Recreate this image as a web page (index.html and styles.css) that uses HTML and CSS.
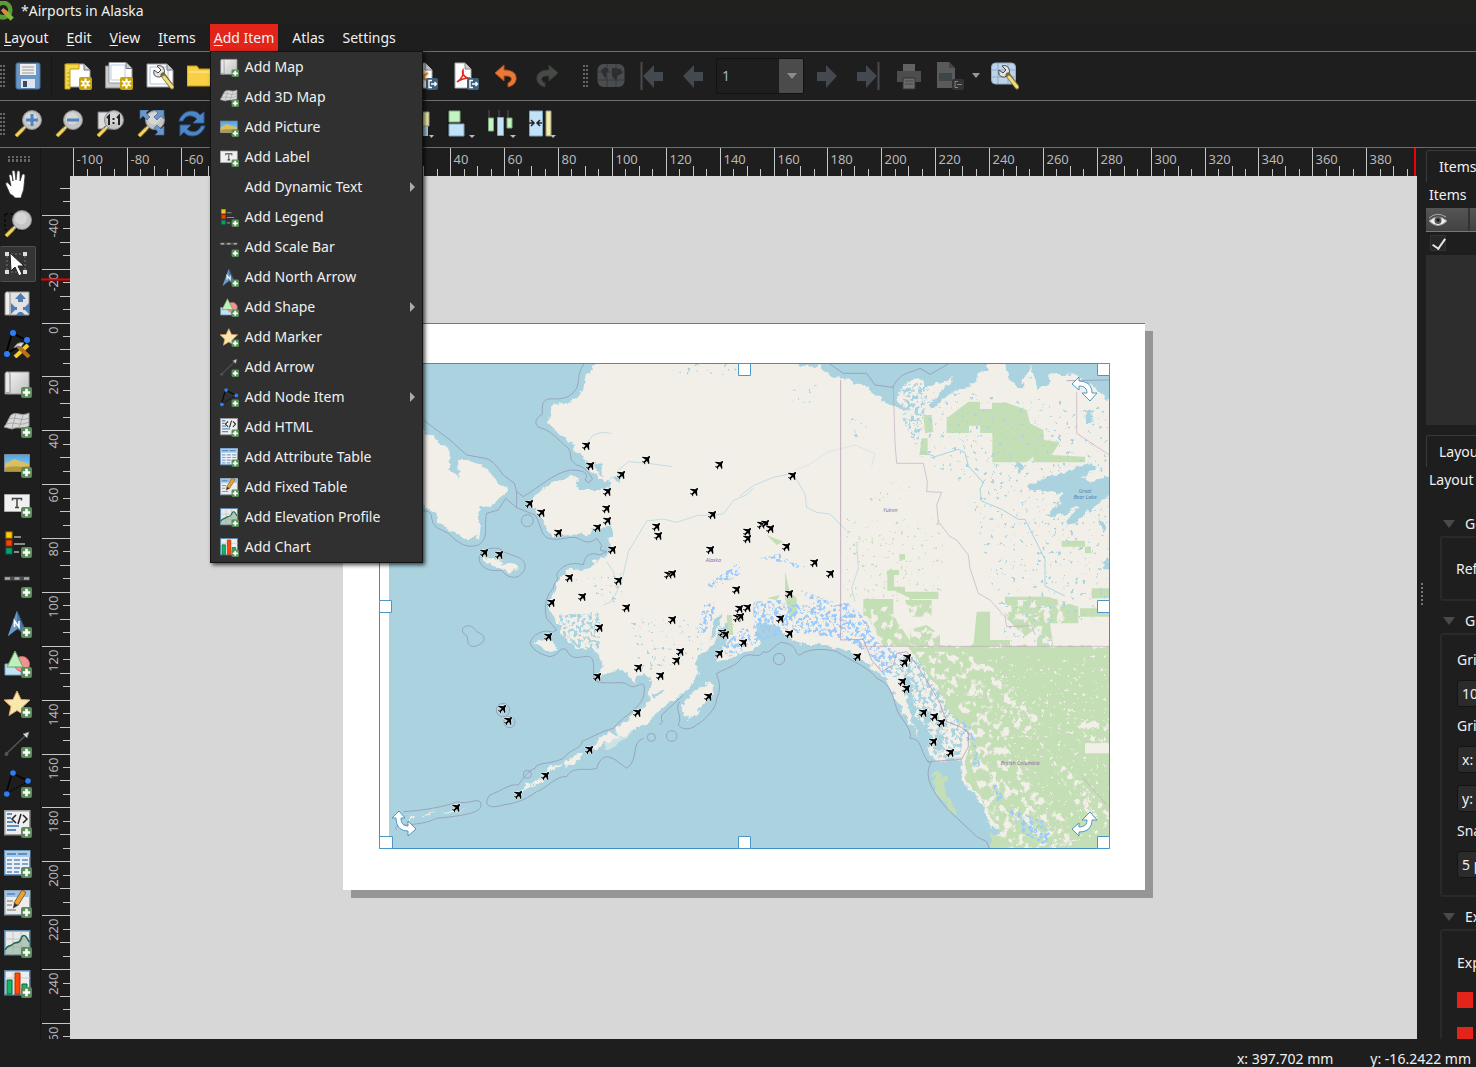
FILE: index.html
```html
<!DOCTYPE html>
<html lang="en">
<head>
  <meta charset="UTF-8" />
  <meta name="viewport" content="width=device-width, initial-scale=1" />
  <title>*Airports in Alaska</title>
  <link rel="stylesheet" href="styles.css">
</head>
<body>

<!-- icon set, shared by the menu and the toolbars -->
<svg class="sprite" aria-hidden="true">
  <defs>
    <linearGradient id="paper" x1="0" y1="0" x2="1" y2="1"><stop offset="0" stop-color="#f2f2f2"/><stop offset="1" stop-color="#bdbdbd"/></linearGradient>
    <linearGradient id="sky" x1="0" y1="0" x2="0" y2="1"><stop offset="0" stop-color="#4aa3e6"/><stop offset="1" stop-color="#a8d8f2"/></linearGradient>
    <g id="badge"><rect x="17" y="17" width="11" height="11" rx="2" fill="#5a8c5a"/><path d="M22.5 18.8v7.4M18.8 22.5h7.4" stroke="#fff" stroke-width="2.6"/></g>
    <g id="star-badge"><rect x="15" y="15" width="13" height="13" rx="2" fill="#c8a30b"/><path d="M21.5 16.5v10M17 19l9 5M17 24l9-5" stroke="#fff" stroke-width="2"/><circle cx="21.500" cy="21.500" r="3" fill="#fff"/><circle cx="21.500" cy="21.500" r="1.500" fill="#e8c84a"/></g>
    <g id="out-badge"><rect x="16" y="16" width="12" height="12" rx="2" fill="#3f607a"/><path d="M22 18.500h-3v7h3M21 22h5.500M24.500 20l2 2-2 2" stroke="#fff" stroke-width="1.400" fill="none"/></g>
    <g id="lens"><path d="M2 26l9-9" stroke="#7a6414" stroke-width="4.500"/><path d="M2 26l7-7" stroke="#f5d35c" stroke-width="3"/><path d="M9 19l4-4" stroke="#ddd" stroke-width="2"/><circle cx="18" cy="10" r="9.500" fill="#c4c4c4" stroke="#8b8b8b"/><circle cx="17" cy="8.500" r="6" fill="#d6d6d6"/></g>
    <g id="wrench"><path d="M11 4c3-1 6 0 7 3 1 2 0 4 0 5l-4 3c-2 0-5 0-6-3-.5-1.500 0-3 0-4l4 3 3-3z" fill="#e5e5e5" stroke="#444"/><path d="M17 13l9 12" stroke="#776a2c" stroke-width="5" stroke-linecap="round"/><path d="M18 15l8 10" stroke="#f0dc84" stroke-width="3" stroke-linecap="round"/></g>
  </defs>
  <symbol id="i-map" viewBox="0 0 28 28"><path d="M5 2h20v22H5z" fill="url(#paper)" stroke="#999"/><path d="M1 4c0-3 5-3 5 0v20H1z" fill="#e8e8e8" stroke="#888"/><path d="M1 24c0-3 5-3 5 0" fill="#aaa"/><use href="#badge"/></symbol>
  <symbol id="i-map3d" viewBox="0 0 28 28"><path d="M7 5c6-4 10 2 18-2v13c-7 4-11 0-17 3l-8-2c3-3 4-8 7-12z" fill="#d8d8d8" stroke="#999"/><path d="M5 9c7-3 11 3 20-1M3 14c8-3 12 3 22-2M12 3L8 18M19 5l-4 13" stroke="#9a9a9a" fill="none" stroke-width=".8"/><use href="#badge"/></symbol>
  <symbol id="i-picture" viewBox="0 0 28 28"><path d="M.5 4.500h25v17H.5z" fill="url(#sky)" stroke="#7b8a94"/><path d="M1 14l9-5 15 5v7H1z" fill="#d9bf62"/><path d="M1 18c8-3 14 0 24-2v5H1z" fill="#b39a3d"/><use href="#badge"/></symbol>
  <symbol id="i-label" viewBox="0 0 28 28"><path d="M.5 4.500h25v17H.5z" fill="#f0f0f0" stroke="#aaa"/><path d="M8.500 10.500v-2h9v2M13 8.500v9M11 17.500h4" stroke="#444" stroke-width="1.500" fill="none"/><use href="#badge"/></symbol>
  <symbol id="i-legend" viewBox="0 0 28 28"><rect x="2" y="2" width="6" height="6" fill="#fcca12" stroke="#b88b00"/><rect x="2" y="10" width="6" height="6" fill="#f4420a" stroke="#9c2a00"/><rect x="2" y="18" width="6" height="6" fill="#0aa55a" stroke="#066"/><path d="M10 7h7M10 14h11M10 22h5" stroke="#8b8b8b" stroke-width="1.800"/><use href="#badge"/></symbol>
  <symbol id="i-scale" viewBox="0 0 28 28"><path d="M0 8.500h26" stroke="#4a4a4a" stroke-width="4"/><path d="M1 8.500h5M10.500 8.500h5M20 8.500h5" stroke="#aaa" stroke-width="2.500"/><use href="#badge"/></symbol>
  <symbol id="i-north" viewBox="0 0 28 28"><path d="M13 1l11 25-11-7-9 7z" fill="#4a79a8" stroke="#2d5379"/><path d="M13 1v18l-9 7z" fill="#6d9ac4"/><path d="M10.500 17v-6l4.500 6v-6" stroke="#fff" stroke-width="1.600" fill="none"/><use href="#badge"/></symbol>
  <symbol id="i-shape" viewBox="0 0 28 28"><path d="M1 14h16v11H1z" fill="#c2e2f7" stroke="#7da2ba"/><circle cx="18" cy="14" r="7.500" fill="#ef9393" stroke="#c56868"/><path d="M11 1l8 16H3z" fill="#bdf0bd" stroke="#67a567"/><use href="#badge"/></symbol>
  <symbol id="i-marker" viewBox="0 0 28 28"><path d="M13 1l4 8.500 9 .5-7 6.500 2 9-8-5-8 5 2-9-7-6.500 9-.5z" fill="#fbe7ae" stroke="#d9a566"/><use href="#badge"/></symbol>
  <symbol id="i-arrow" viewBox="0 0 28 28"><path d="M2 24L21 6" stroke="#555" stroke-width="1.500"/><circle cx="2.500" cy="24" r="2" fill="#555"/><path d="M25 2l-2 6-4-4z" fill="#ddd" stroke="#777"/><use href="#badge"/></symbol>
  <symbol id="i-node" viewBox="0 0 28 28"><path d="M2 24L8 3l16 8" stroke="#050505" stroke-width="1.600" fill="none"/><path d="M2 24l22-13" stroke="#050505" stroke-width="1.500" stroke-dasharray="1.500 1.500"/><g fill="#2d7ff9"><circle cx="2.800" cy="24" r="2.800"/><circle cx="9" cy="3" r="2.800"/><circle cx="24" cy="11" r="2.800"/></g><use href="#badge"/></symbol>
  <symbol id="i-html" viewBox="0 0 28 28"><path d="M.8.8h25v24H.8z" fill="#eee" stroke="#999" stroke-width="1.500"/><path d="M3 4h5M3 8h4M3 12h6M3 16h12M3 20h9" stroke="#5f8fc2" stroke-width="2"/><path d="M12 5L8 9l4 4M19 5l4 4-4 4M17 4l-3 10" stroke="#222" stroke-width="1.500" fill="none"/><use href="#badge"/></symbol>
  <symbol id="i-table" viewBox="0 0 28 28"><path d="M.8.8h25v24H.8z" fill="#eaf0f6" stroke="#6d96bb" stroke-width="1.500"/><path d="M1 1h25v6H1z" fill="#a9cbe8"/><path d="M3 4h9M14 4h9" stroke="#5f8fc2" stroke-width="1.800"/><path d="M3 10h5M10 10h6M18 10h6M3 14h5M10 14h6M18 14h6M3 18h5M10 18h6M3 22h5M10 22h5" stroke="#7fa3c9" stroke-width="1.800"/><use href="#badge"/></symbol>
  <symbol id="i-fixed" viewBox="0 0 28 28"><path d="M.8.8h25v24H.8z" fill="#ececec" stroke="#8c9fb0" stroke-width="1.500"/><path d="M1 1h25v6H1z" fill="#9cc3e6"/><path d="M3 4h8" stroke="#5f8fc2" stroke-width="1.800"/><path d="M3 11h6M3 15h5M3 20h9" stroke="#999" stroke-width="1.500"/><path d="M10 13l8-13 4 2.500-8 13z" fill="#e8a23d" stroke="#8f5e14"/><path d="M10 13l4 2.500-5 3z" fill="#333"/><use href="#badge"/></symbol>
  <symbol id="i-profile" viewBox="0 0 28 28"><path d="M.8.8h25v24H.8z" fill="#e9e9e9" stroke="#5d86a8" stroke-width="1.500"/><path d="M9 1v24M17 1v24M1 9h25M1 17h25" stroke="#c4c4c4"/><path d="M1 20c3-6 5-3 8-6s6 1 8-5 5-4 8 1v15H1z" fill="#8fb09d" opacity=".6"/><path d="M1 20c3-6 5-3 8-6s6 1 8-5 5-4 8 3" stroke="#236b4b" stroke-width="1.600" fill="none"/><use href="#badge"/></symbol>
  <symbol id="i-chart" viewBox="0 0 28 28"><path d="M.8.8h25v24H.8z" fill="#eee" stroke="#5d86a8" stroke-width="1.500"/><path d="M9 1v24M1 8h25" stroke="#ccc"/><path d="M3 10h5v14H3z" fill="#14b868" stroke="#05693a"/><path d="M11 3h5v21h-5z" fill="#ff4a0a" stroke="#b22d00"/><path d="M18 14h5v10h-5z" fill="#14b868" stroke="#05693a"/><use href="#badge"/></symbol>

  <symbol id="i-pan" viewBox="0 0 28 28"><path d="M6 24L2 15c-1-3 2-3 3-1l2 2L5 6c0-2 2-2 3 0l1 5-1-9c0-2 3-2 3 0l1 8 1-8c0-2 3-1 3 0l0 9 2-6c1-2 3-1 3 1l-1 10c0 5-2 7-3 12H11c-1-2-3-3-5-4z" fill="#fff" stroke="#333" stroke-width=".8"/></symbol>
  <symbol id="i-zoom" viewBox="0 0 28 28"><path d="M1 4h18v16H1z" fill="none" stroke="#000" stroke-dasharray="3 2"/><use href="#lens"/></symbol>
  <symbol id="i-select" viewBox="0 0 28 28"><path d="M3 4h18v18H3z" fill="none" stroke="#777" stroke-dasharray="2 2"/><g fill="#ddd"><path d="M1 2h4v4H1zM19 2h4v4h-4zM1 20h4v4H1zM19 20h4v4h-4z"/></g><path d="M6 3l1 18 4-4 4 9 3-2-4-8h6z" fill="#fff" stroke="#222"/></symbol>
  <symbol id="i-move" viewBox="0 0 28 28"><path d="M5 2h20v23H5z" fill="#e2e2e2" stroke="#999"/><path d="M1 4c0-3 5-3 5 0v21H1z" fill="#eee" stroke="#888"/><g fill="#4d7eb2"><path d="M16.500 3l5.500 6h-3v3h-5V9h-3z"/><path d="M7 13l4 4h2v3h-2l-4 4z"/><path d="M25 13l-4 4h-2v3h2l4 4z"/><path d="M12 25l3-3h3l3 3z"/></g></symbol>
  <symbol id="i-edit-nodes" viewBox="0 0 28 28"><path d="M2 24L8 3l16 8z" stroke="#000" fill="none" stroke-width="1.800"/><g fill="#2d7ff9"><circle cx="3" cy="24" r="3"/><circle cx="9" cy="3" r="3"/><circle cx="23" cy="10" r="3"/></g><path d="M11 27l13-12" stroke="#f5cf22" stroke-width="4"/><path d="M13 15l12 12" stroke="#b87318" stroke-width="4"/><path d="M10 18c2-5 6-6 10-5l-3 4-3-1z" fill="#ddd" stroke="#777"/></symbol>

  <symbol id="i-save" viewBox="0 0 28 28"><rect x="2" y="1" width="24" height="26" rx="2" fill="#6a97c7" stroke="#48709b"/><path d="M6 2h16v11H6z" fill="#eee"/><path d="M8 5h12M8 8h12M8 11h12" stroke="#999"/><path d="M7 17h14v9H7z" fill="#dce6ee"/><path d="M9 19h4v6H9z" fill="#446"/></symbol>
  <symbol id="i-new" viewBox="0 0 28 28"><path d="M3 2h17l6 6v17H3z" fill="#fff" stroke="#999"/><path d="M20 2v6h6" fill="#ccc" stroke="#777"/><path d="M1 2h14v5H6v20H1z" fill="#f5d94c" stroke="#c39a10"/><path d="M3 11h3M3 15h3M3 19h3M3 23h3" stroke="#c39a10"/><use href="#star-badge"/></symbol>
  <symbol id="i-duplicate" viewBox="0 0 28 28"><path d="M.5 4h20v22H.5z" fill="#ccc" stroke="#888"/><path d="M4 .5h17l6 6V21H4z" fill="#fff" stroke="#999"/><path d="M6 3h14v15H6z" fill="none" stroke="#b7cbe8"/><path d="M21 .5v6h6" fill="#ccc" stroke="#777"/><use href="#star-badge"/></symbol>
  <symbol id="i-manager" viewBox="0 0 28 28"><path d="M1 2h20l6 6v17H1z" fill="#fff" stroke="#999"/><path d="M4 5h18v17H4z" fill="none" stroke="#a9c2e6"/><path d="M21 2v6h6" fill="#ccc" stroke="#777"/><use href="#wrench"/></symbol>
  <symbol id="i-folder" viewBox="0 0 28 28"><path d="M0 4h10l2 3h15v17H0z" fill="#f9cf45" stroke="#c79a10"/><path d="M2 10h25" stroke="#fff0a8"/></symbol>
  <symbol id="i-svg" viewBox="0 0 28 28"><path d="M1 1h14l7 7v18H1z" fill="#fff" stroke="#aaa"/><path d="M15 1v7h7" fill="#ccc" stroke="#888"/><path d="M12 8v14M6 11l12 8M6 19l12-8" stroke="#f39a1e" stroke-width="2.500"/><use href="#out-badge"/></symbol>
  <symbol id="i-pdf" viewBox="0 0 28 28"><path d="M4 1h10l6 6v19H4z" fill="#fff" stroke="#aaa"/><path d="M14 1v6h6" fill="#ccc" stroke="#888"/><path d="M6 20c5-3 7-8 6-12-2 4 3 9 7 8-5 0-9 1-13 4z" fill="none" stroke="#e02a1a" stroke-width="1.500"/><use href="#out-badge"/></symbol>
  <symbol id="i-undo" viewBox="0 0 28 28"><path d="M3 11l9-8v5c9 0 13 4 12 10-1 4-4 6-8 7v-4c5-2 5-8-4-7v5z" fill="#e8793a" stroke="#b4511a"/></symbol>
  <symbol id="i-redo" viewBox="0 0 28 28"><path d="M25 11l-9-8v5C7 8 3 12 4 18c1 4 4 6 8 7v-4c-5-2-5-8 4-7v5z" fill="#464b46" stroke="#383c38"/></symbol>
  <symbol id="i-atlas" viewBox="0 0 28 28"><rect x=".5" y="2" width="27" height="23" rx="6" fill="#4a4d50"/><path d="M4 8l5-3 3 3-3 4v5l-3-4zM15 6l9 1 1 5-4 1-2 6-4-5zM6 20l4 2M20 21l4-2" fill="#2b2d2f"/><path d="M10 2v23M19 2v23M0 10h28M0 18h28" stroke="#333" stroke-width=".8"/></symbol>
  <symbol id="i-prev" viewBox="0 0 28 28"><path d="M4 14L15 3v7h9v9h-9v7z" fill="#43494e"/></symbol>
  <symbol id="i-first" viewBox="0 0 28 28"><path d="M3.500 0v28" stroke="#4a4a4a" stroke-width="2"/><path d="M5 14L16 3v7h9v9h-9v7z" fill="#43494e"/></symbol>
  <symbol id="i-next" viewBox="0 0 28 28"><path d="M24 14L13 3v7H4v9h9v7z" fill="#43494e"/></symbol>
  <symbol id="i-last" viewBox="0 0 28 28"><path d="M24.500 0v28" stroke="#4a4a4a" stroke-width="2"/><path d="M23 14L12 3v7H3v9h9v7z" fill="#43494e"/></symbol>
  <symbol id="i-print" viewBox="0 0 28 28"><path d="M8 2h12v8H8z" fill="#626262"/><path d="M2 9h24v11H2z" fill="#4d4d4d"/><path d="M8 16h12v11H8z" fill="#6a6a6a" stroke="#333"/><path d="M10 19h8M10 22h8" stroke="#444"/></symbol>
  <symbol id="i-export" viewBox="0 0 28 28"><path d="M1 0h12l6 6v20H1z" fill="#5a5a5a"/><path d="M3 11h13v8H3z" fill="#3c4548"/><path d="M13 0v6h6" fill="#444"/><rect x="16" y="17" width="12" height="11" rx="2" fill="#333"/><path d="M22 19.500h-3v6h3M21 22.500h5" stroke="#888" fill="none"/></symbol>
  <symbol id="i-atlas-set" viewBox="0 0 28 28"><rect x=".5" y="1" width="24" height="21" rx="4" fill="#bcd3ea" stroke="#8eabc9"/><path d="M7 1v21M17 1v21M0 8h24M0 15h24" stroke="#7f9fc0" stroke-width=".7"/><use href="#wrench"/></symbol>

  <symbol id="i-zoomin" viewBox="0 0 28 28"><use href="#lens"/><path d="M18 4v12M12 10h12" stroke="#4f84c0" stroke-width="3"/></symbol>
  <symbol id="i-zoomout" viewBox="0 0 28 28"><use href="#lens"/><path d="M12 10h12" stroke="#4f84c0" stroke-width="3"/></symbol>
  <symbol id="i-zoom1" viewBox="0 0 28 28"><path d="M2 2h14v17H2z" fill="#ddd" stroke="#777"/><use href="#lens"/><path d="M11 8l2-2v9M21 8l2-2v9M17.500 8v2M17.500 12v2" stroke="#222" stroke-width="2" fill="none"/></symbol>
  <symbol id="i-full" viewBox="0 0 28 28"><use href="#lens"/><g fill="#6a97c7" stroke="#3d6895" stroke-width=".7"><path d="M3 0h9l-3 3 4 4-3 3-4-4-3 3z"/><path d="M27 0v9l-3-3-4 4-3-3 4-4-3-3z"/><path d="M27 25h-9l3-3-4-4 3-3 4 4 3-3z"/></g></symbol>
  <symbol id="i-refresh" viewBox="0 0 28 28"><g fill="#4f86c6" stroke="#2a5a96"><path d="M1 11C5-1 18-1 22 5l4-3v11H15l4-4C14 4 7 5 5 11z"/><path d="M27 16c-4 12-17 12-21 6l-4 4V15h11l-4 4c5 5 12 3 14-3z"/></g></symbol>
  <symbol id="i-raise" viewBox="0 0 28 28"><path d="M4 12h18v14H4z" fill="#a8cbe0"/><path d="M8 2h15v14H8z" fill="#f2ee9c" stroke="#999"/><path d="M23 25h5l-2.500 3z" fill="#bbb"/></symbol>
  <symbol id="i-align" viewBox="0 0 28 28"><path d="M1 0v27" stroke="#111"/><path d="M2 1h11v11H2z" fill="#c3f5c3" stroke="#7da97d"/><path d="M2 14h15v12H2z" fill="#c2e2f7" stroke="#7da2ba"/><path d="M22 25h6l-3 3z" fill="#bbb"/></symbol>
  <symbol id="i-distribute" viewBox="0 0 28 28"><path d="M1 0v8M11 0v8M20 0v8" stroke="#555"/><path d="M.5 8h5v13h-5z" fill="#c3f5c3" stroke="#7da97d"/><path d="M9.500 7.500h6v18h-6z" fill="#c2e2f7" stroke="#7da2ba"/><path d="M19 8h5v10h-5z" fill="#c3f5c3" stroke="#7da97d"/><path d="M22 25h6l-3 3z" fill="#bbb"/></symbol>
  <symbol id="i-resize" viewBox="0 0 28 28"><path d="M.5 1h13v25H.5z" fill="#c2e2f7" stroke="#7da2ba"/><path d="M17 1h5v25h-5z" fill="#f2ee9c" stroke="#999"/><path d="M0 13h4M2 10l3 3-3 3M13 13H9M11 10l-3 3 3 3" stroke="#222" fill="none" stroke-width="1.500"/><path d="M21 25h6l-3 3z" fill="#bbb"/></symbol>
</svg>

<header class="title-bar">
  <svg class="logo" viewBox="0 0 22 22"><circle cx="10" cy="10" r="8" fill="none" stroke="#5d9b33" stroke-width="5"/><path d="M11 11l9 9" stroke="#83b93c" stroke-width="5"/><path d="M9 9l5 5" stroke="#f0803c" stroke-width="4"/></svg>
  <h1>*Airports in Alaska</h1>
</header>

<nav class="menu-bar">
  <button><u>L</u>ayout</button>
  <button><u>E</u>dit</button>
  <button><u>V</u>iew</button>
  <button><u>I</u>tems</button>
  <div class="menu-holder">
    <button class="open" aria-expanded="true"><u>A</u>dd Item</button>
    <ul class="menu">
      <li><button><svg><use href="#i-map"/></svg>Add Map</button></li>
      <li><button><svg><use href="#i-map3d"/></svg>Add 3D Map</button></li>
      <li><button><svg><use href="#i-picture"/></svg>Add Picture</button></li>
      <li><button><svg><use href="#i-label"/></svg>Add Label</button></li>
      <li><button class="sub"><svg></svg>Add Dynamic Text</button></li>
      <li><button><svg><use href="#i-legend"/></svg>Add Legend</button></li>
      <li><button><svg><use href="#i-scale"/></svg>Add Scale Bar</button></li>
      <li><button><svg><use href="#i-north"/></svg>Add North Arrow</button></li>
      <li><button class="sub"><svg><use href="#i-shape"/></svg>Add Shape</button></li>
      <li><button><svg><use href="#i-marker"/></svg>Add Marker</button></li>
      <li><button><svg><use href="#i-arrow"/></svg>Add Arrow</button></li>
      <li><button class="sub"><svg><use href="#i-node"/></svg>Add Node Item</button></li>
      <li><button><svg><use href="#i-html"/></svg>Add HTML</button></li>
      <li><button><svg><use href="#i-table"/></svg>Add Attribute Table</button></li>
      <li><button><svg><use href="#i-fixed"/></svg>Add Fixed Table</button></li>
      <li><button><svg><use href="#i-profile"/></svg>Add Elevation Profile</button></li>
      <li><button><svg><use href="#i-chart"/></svg>Add Chart</button></li>
    </ul>
  </div>
  <button>Atlas</button>
  <button>Settings</button>
</nav>

<div class="toolbar-row">
  <div class="toolbar">
    <span class="grip"></span>
    <button aria-label="Save project"><svg><use href="#i-save"/></svg></button>
    <span class="sep"></span>
    <button aria-label="New layout"><svg><use href="#i-new"/></svg></button>
    <button aria-label="Duplicate layout"><svg><use href="#i-duplicate"/></svg></button>
    <button aria-label="Layout manager"><svg><use href="#i-manager"/></svg></button>
    <button aria-label="Add from template"><svg><use href="#i-folder"/></svg></button>
    <button aria-label="Save as template"><svg><use href="#i-save"/></svg></button>
    <span class="sep"></span>
    <button aria-label="Print"><svg><use href="#i-print"/></svg></button>
    <span class="sep"></span>
    <button aria-label="Page setup"><svg><use href="#i-manager"/></svg></button>
    <button aria-label="Export as image"><svg><use href="#i-svg"/></svg></button>
    <button aria-label="Export as SVG"><svg><use href="#i-svg"/></svg></button>
    <button aria-label="Export as PDF"><svg><use href="#i-pdf"/></svg></button>
    <button aria-label="Undo"><svg><use href="#i-undo"/></svg></button>
    <button aria-label="Redo" disabled><svg><use href="#i-redo"/></svg></button>
  </div>
  <div class="toolbar">
    <span class="grip"></span>
    <button aria-label="Preview atlas" disabled><svg><use href="#i-atlas"/></svg></button>
    <button aria-label="First feature" disabled><svg><use href="#i-first"/></svg></button>
    <button aria-label="Previous feature" disabled><svg><use href="#i-prev"/></svg></button>
    <span class="combo"><select aria-label="Atlas page"><option>1</option></select></span>
    <button aria-label="Next feature" disabled><svg><use href="#i-next"/></svg></button>
    <button aria-label="Last feature" disabled><svg><use href="#i-last"/></svg></button>
    <button aria-label="Print atlas" disabled><svg><use href="#i-print"/></svg></button>
    <button class="drop" aria-label="Export atlas" disabled><svg><use href="#i-export"/></svg></button>
    <button aria-label="Atlas settings"><svg><use href="#i-atlas-set"/></svg></button>
  </div>
</div>

<div class="toolbar-row">
  <div class="toolbar">
    <span class="grip"></span>
    <button aria-label="Zoom in"><svg><use href="#i-zoomin"/></svg></button>
    <button aria-label="Zoom out"><svg><use href="#i-zoomout"/></svg></button>
    <button aria-label="Zoom to 100%"><svg><use href="#i-zoom1"/></svg></button>
    <button aria-label="Zoom full"><svg><use href="#i-full"/></svg></button>
    <button aria-label="Refresh view"><svg><use href="#i-refresh"/></svg></button>
  </div>
  <div class="toolbar">
    <span class="grip"></span>
    <button aria-label="Lock items"><svg><use href="#i-label"/></svg></button>
    <button aria-label="Unlock items"><svg><use href="#i-label"/></svg></button>
    <button aria-label="Group"><svg><use href="#i-shape"/></svg></button>
    <button aria-label="Ungroup"><svg><use href="#i-shape"/></svg></button>
    <button aria-label="Raise items"><svg><use href="#i-raise"/></svg></button>
    <button aria-label="Align items"><svg><use href="#i-align"/></svg></button>
    <button aria-label="Distribute items"><svg><use href="#i-distribute"/></svg></button>
    <button aria-label="Resize items"><svg><use href="#i-resize"/></svg></button>
  </div>
</div>

<main class="workspace">
  <aside class="toolbox">
    <span class="grip-h"></span>
    <button aria-label="Pan layout"><svg><use href="#i-pan"/></svg></button>
    <button aria-label="Zoom"><svg><use href="#i-zoom"/></svg></button>
    <button class="active" aria-label="Select item"><svg><use href="#i-select"/></svg></button>
    <button aria-label="Move item content"><svg><use href="#i-move"/></svg></button>
    <button aria-label="Edit nodes"><svg><use href="#i-edit-nodes"/></svg></button>
    <button aria-label="Map"><svg><use href="#i-map"/></svg></button>
    <button aria-label="3D map"><svg><use href="#i-map3d"/></svg></button>
    <button aria-label="Picture"><svg><use href="#i-picture"/></svg></button>
    <button aria-label="Label"><svg><use href="#i-label"/></svg></button>
    <button aria-label="Legend"><svg><use href="#i-legend"/></svg></button>
    <button aria-label="Scale bar"><svg><use href="#i-scale"/></svg></button>
    <button aria-label="North arrow"><svg><use href="#i-north"/></svg></button>
    <button aria-label="Shape"><svg><use href="#i-shape"/></svg></button>
    <button aria-label="Marker"><svg><use href="#i-marker"/></svg></button>
    <button aria-label="Arrow"><svg><use href="#i-arrow"/></svg></button>
    <button aria-label="Node item"><svg><use href="#i-node"/></svg></button>
    <button aria-label="HTML"><svg><use href="#i-html"/></svg></button>
    <button aria-label="Attribute table"><svg><use href="#i-table"/></svg></button>
    <button aria-label="Fixed table"><svg><use href="#i-fixed"/></svg></button>
    <button aria-label="Elevation profile"><svg><use href="#i-profile"/></svg></button>
    <button aria-label="Chart"><svg><use href="#i-chart"/></svg></button>
  </aside>

  <section class="view">
    <svg class="ruler-top" id="ruler-top"></svg>
    <svg class="ruler-left" id="ruler-left"></svg>
    <div class="canvas">
      <div class="page" id="page">
        <!-- map units are a third of a pixel -->
        <svg class="map" viewBox="27 24 2193 1458">
          <defs>
            <filter id="rough" x="-5%" y="-5%" width="110%" height="110%"><feTurbulence type="fractalNoise" baseFrequency=".045" numOctaves="4" seed="4"/><feDisplacementMap in="SourceGraphic" scale="26" xChannelSelector="R" yChannelSelector="G"/></filter>
            <filter id="speckle" x="0" y="0" width="100%" height="100%"><feTurbulence type="fractalNoise" baseFrequency=".09" numOctaves="4" seed="9" result="n"/><feColorMatrix in="n" values="0 0 0 0 0  0 0 0 0 0  0 0 0 0 0  0 0 0 9 -4.400" result="m"/><feComposite in="SourceGraphic" in2="m" operator="in"/></filter>
            <filter id="fleck" x="0" y="0" width="100%" height="100%"><feTurbulence type="fractalNoise" baseFrequency=".05 .04" numOctaves="5" seed="12" result="n"/><feColorMatrix in="n" values="0 0 0 0 0  0 0 0 0 0  0 0 0 0 0  0 0 0 9 -4.700" result="m"/><feComposite in="SourceGraphic" in2="m" operator="in"/></filter>
            <filter id="sparse" x="0" y="0" width="100%" height="100%"><feTurbulence type="fractalNoise" baseFrequency=".08" numOctaves="4" seed="21" result="n"/><feColorMatrix in="n" values="0 0 0 0 0  0 0 0 0 0  0 0 0 0 0  0 14 0 0 -9.500" result="m"/><feComposite in="SourceGraphic" in2="m" operator="in"/></filter>
            <symbol id="plane" viewBox="-5 -5 10 10" overflow="visible"><path d="M3.800-3.800c-.6-.6-1.600.2-2.400 1L-3.400-3.200l-.6.7L-.4-.6-2.200 1.400-3.700 1.200l-.5.6 2 .9.800 1.900.6-.5-.1-1.500L1 .9 2.700 4.300l.7-.7L3-1.200c.8-.8 1.400-2 .8-2.600z"/></symbol>
            <g id="rotate"><path d="M-12-6l7-7v4C4-9 8-4 8 3h5l-7 8-8-8h5c0-4-2-7-8-7v4z" fill="#fff" stroke="#4d97c8"/></g>
          </defs>
          <rect x="27" y="24" width="2193" height="1458" fill="#fff"/>
          <rect x="57" y="24" width="2163" height="1458" fill="#aad3df"/>

          <g filter="url(#rough)">
            <g fill="#f2efe9">
              <path d="M57 180L165 228 200 250 222 270 235 292 237 318 300 318 345 335 370 365 415 405 405 415 385 432 365 450 335 455 325 475 330 505 325 545 300 555 275 545 235 520 205 500 200 475 160 450 57 430z"/>
              <path d="M672 0L672 40 650 60 645 80 635 110 600 140 537 150 540 175 532 200 545 218 575 240 605 265 612 290 635 305 650 320 665 350 680 365 700 378 718 378 722 395 700 405 625 405 622 362 590 368 555 380 520 400 495 425 478 450 498 462 512 478 520 500 530 520 545 540 580 545 630 535 650 540 680 520 720 515 725 540 715 550 722 590 700 610 670 622 655 640 635 645 600 640 580 655 560 685 555 710 540 740 535 770 565 805 575 835 600 865 630 885 665 880 685 895 695 935 685 970 710 955 760 945 780 965 792 983 800 960 825 955 845 970 838 1005 835 1040 805 1065 770 1095 740 1120 740 1140 760 1140 810 1120 845 1090 880 1055 920 1030 960 1000 985 950 975 925 1010 885 1040 845 1045 820 1075 800 1090 810 1075 835 1070 865 1045 895 1035 925 1070 920 1110 895 1150 885 1170 865 1160 825 1210 815 1240 835 1270 860 1310 870 1370 870 1430 885 1460 900 1510 935 1550 975 1570 1015 1590 1055 1620 1105 1640 1135 1670 1165 1680 1205 1710 1217 1775 1213 1775 1275 1810 1315 1840 1355 1860 1415 1900 1430 1860 1445 1870 1520H2260V150L2218 135 2170 100 2150 80 2110 60 2040 55 2030 90 2000 105 1985 30 1975 70 1955 80 1960 100 1930 85 1910 50 1900 0H1855L1850 45 1810 75 1790 100 1750 110 1710 140 1685 165 1670 155 1700 120 1730 95 1750 70 1710 85 1670 100 1650 70 1610 85 1585 110 1580 135 1605 160 1560 150 1510 115 1480 90 1430 75 1390 65 1345 35 1290 35 1260 0z"/>
              <path d="M340 605L360 612 400 625 445 630 445 645 415 655 395 640 350 628z"/>
              <path d="M495 865L530 850 550 862 560 885 530 888z"/>
              <path d="M935 1060L950 1030 990 1000 1020 980 1035 990 1025 1020 1000 1050 960 1090 940 1085z"/>
              <path d="M665 1175L690 1145 720 1135 745 1145 700 1170 672 1185zM580 1228L610 1205 640 1195 620 1220 590 1235zM485 1290L520 1265 530 1270 480 1298zM585 1222L560 1240 510 1262 540 1236z"/>
              <path d="M585 1230L600 1205 622 1195 640 1193 625 1206 600 1216zM450 1310L470 1285 482 1292 470 1305zM235 1368L300 1365 210 1375zM165 1378L205 1370 160 1385zM120 1380L135 1388 122 1392z"/>
              <path d="M720 1145L800 1120 740 1170 700 1190z" opacity=".5"/>
            </g>
            <!-- bays, sounds and big lakes -->
            <g fill="#aad3df">
              <path d="M240 318h25v30l5 25-15-15-15-15zM680 320l20 5-5 20 10 15-25-5zM715 365l40-5-10 20z"/>
              <path d="M1160 800l60 10 20 30-60 30-20-20zM1035 790l20-10-20 60-15 20z"/>
              <path d="M1970 395L2030 370 2110 345 2150 325 2180 335 2130 370 2160 380 2220 365 2220 420 2190 440 2150 470 2120 500 2095 510 2095 495 2130 455 2120 450 2085 480 2025 485 2070 440 2075 420 2040 410 1980 405z"/>
              <path d="M2150 170h12v40h-12zM1880 270l20 20 15 30-25-10zM1930 300l40 45-30 5zM2190 480l20 40-10 15zM2195 620l25-10v30h-20zM850 1010l30 5-30 10z"/>
              <path d="M1610 935l20 80 10 70 50 60-20 30-40-60-25-100zM1650 1000l30 100-15 20zM1700 1080l20 100-15 10z"/>
            </g>
            <!-- parks and forest -->
            <g fill="#c4dfb6">
              <path d="M1615 874H2250V1520H1865L1900 1440 1870 1400 1840 1340 1790 1275 1790 1210 1805 1130 1750 1090 1700 1000 1660 940z"/>
              <path d="M1690 1250l45 10-15 50 45 60-10 10-60-70z"/>
              <path d="M1860 1435l60 10v80h-60z"/>
            </g>
          </g>
          <g fill="#c4dfb6">
            <path d="M1730 190L1795 140H1830V162H1867V143H1910L1970 165 1980 205 2020 225 2022 255 2070 262 2045 300 2145 305V322H1990V305L1970 322H1867V234H1830V212H1797V234H1730z"/>
            <path d="M1660 180l25 0 5 50-25 5zM1655 250l18 0 0 50-25 0zM2075 557h70v18h-70zM2145 575h18v20h-18zM1588 597h17v17h-17zM1552 645h35v15h-15v35h33v15h100v22h-80l-20-10-30-15h-23z"/>
            <path d="M1480 732h90v50h-90zM1605 735h80v50h-60zM1905 725h130l90 30v70h-60l-40-30-60 50-60-60zM2010 770h40v104h-50zM1820 770h40v85h60v19h-110zM1670 810l40 30v34h-90v-50zM2165 700h55v30h-55zM2130 760h90v25h-90zM1490 780h80l60 94h-90z"/>
            <path d="M1245 650l15 60 20 20 0 50-20 10-15-60zM1190 540l50 20-20 10zM1190 730l40-10-10 15zM1070 780l15 0 5 60-15 0z"/>
          </g>
          <g filter="url(#fleck)">
            <path d="M1625 890L1790 890 1900 960 2000 1080 2010 1120 1900 1160 1990 1300 2090 1400 2110 1482H1900L1840 1340 1800 1220 1800 1100 1700 980z" fill="#f2efe9"/>
            <path d="M2090 1060L2215 1100V1190L2150 1180zM2000 1150L2220 1370V1420L2120 1350z" fill="#f2efe9"/>
            <path d="M1480 760L1760 740 1780 874H1540z" fill="#f2efe9"/>
            <path d="M1880 735L2100 735 2060 874H1890z" fill="#f2efe9"/>
          </g>
          <g filter="url(#speckle)">
            <path d="M1150 740L1230 735 1290 750 1400 750 1440 740 1490 800 1520 860 1600 900 1680 960 1740 1080 1800 1110 1815 1170 1760 1140 1700 1060 1650 980 1540 960 1500 900 1420 850 1250 830 1150 870z" fill="#9bcbfa"/>
            <path d="M1010 690L1110 620 1110 660 1030 700zM1170 610l60-15 20 30zM1245 610l60 25-30 5zM1290 705l100 35-40 30zM1000 750l40-10-20 80-40 30zM1060 870l70-60 20 60-80 40zM1910 1360l120 40 20 85-90-50zM1810 1130l20 100-20 20zM1860 1250l40 80-20 10z" fill="#9bcbfa"/>
            <path d="M560 780L690 770 690 880 630 885 580 840z" fill="#aad3df"/>
            <path d="M1590 90L1680 80 1640 280 1600 200z" fill="#aad3df"/>
            <path d="M1560 930L1640 900 1780 1140 1770 1210 1690 1210z" fill="#aad3df"/>
          </g>
          <g filter="url(#sparse)">
            <path d="M1640 100L2215 150V860H1900L1800 400 1640 300z" fill="#aad3df"/>
            <path d="M580 660L760 640 800 1000 1000 900V800L760 780z" fill="#aad3df"/>
            <path d="M1430 490H1720V740H1430zM1500 380h120v60h-120z" fill="#c4dfb6"/>
            <path d="M1850 900H2220V1470H1990z" fill="#f2efe9"/>
            <path d="M900 24H1100V60H900zM1260 90h80v60h-80zM1430 190h60v60h-60z" fill="#aad3df"/>
          </g>
          <path d="M1710 772h90v84h-90zM2040 805h180v66h-170zM2145 1165h75v30h-75z" fill="#f2efe9"/>

          <!-- rivers -->
          <g fill="none" stroke="#aad3df" stroke-width="3">
            <path d="M1655 290l40 15 70-22 20 10 10 40 45 50-10 20 5 35 60 25 50 30 20 0 40 80 20 40 0 80 60 30"/>
            <g stroke-width="2">
              <path d="M650 265l20-25 25-8 30 3M745 345l30-25 60 5 70 10M740 700l-10-50-20-30"/>
              <path d="M700 750l25-10 30-60 20-90 30-50 25-42 50-6 40 10 60-20 80-5 30-40 40-18 20-20M1110 422l40-30 60-25 50-10 15 10 30 50 5 40 30 15 40 5 50 50"/>
              <path d="M1460 560l5 80-20 60 10 40" />
              <path d="M1275 345l40-15 60-40 80-20 60 25-10 40" opacity=".5"/>
            </g>
          </g>

          <!-- state borders -->
          <g fill="none" stroke="#b296b4" stroke-width="3" opacity=".75">
            <path d="M1412 75V855L1480 853 1505 915 1535 950 1570 930 1580 895 1610 890 1640 930 1670 975 1710 1045 1730 1100 1770 1115 1795 1130V1175L1775 1213 1670 1220"/>
            <path d="M1470 874H2220" stroke-width="2"/>
            <path d="M1570 95L1575 265 1580 325H1660L1672 380 1670 410 1715 412 1700 450 1705 500 1740 545 1760 555 1795 600 1800 640 1825 715 1860 735 1905 785 1910 815 1985 812 1996 840" stroke-width="2"/>
            <path d="M2120 110V235L2218 300M2140 1270l70 80" stroke-width="2"/>
          </g>
          <!-- maritime limits -->
          <g fill="none" stroke="#8f86ac" stroke-width="2.500" stroke-linejoin="round" opacity=".75">
            <path d="M643 24C620 60 630 70 620 100 600 130 580 130 560 132 520 128 515 140 517 178 495 190 490 210 510 218 540 225 560 250 595 280 610 300 590 310 620 330 640 335 650 345 668 372L655 383 645 375Q665 345 600 345C550 355 510 395 460 425L440 410 433 385 400 360Q365 310 345 310L290 300 240 255 160 195"/>
            <path d="M440 410V458M160 468Q185 465 185 490C190 530 230 520 250 550 290 580 300 575 325 570 360 550 340 510 350 475L385 465 407 430 440 458 495 480C515 510 510 540 535 550 570 560 600 540 625 550 650 565 660 565 680 550L695 570 690 585 710 590 690 600C660 590 645 600 640 630 600 615 565 640 560 660 570 675 550 680 550 700 530 720 520 750 530 790L560 825 548 832C520 820 485 840 480 865 490 890 520 900 540 905 570 900 570 870 590 885 610 930 650 890 665 910 680 930 660 965 680 980 720 990 760 975 775 990 800 1010 825 960 823 1010 820 1060 760 1080 730 1120 690 1130 660 1150 635 1160 640 1180 600 1180 580 1210 540 1230 500 1220 495 1240 470 1250 460 1270 445 1290 420 1285 400 1305 360 1320 340 1345 350 1365 400 1350 430 1345 460 1340 500 1310 530 1300 560 1260 590 1265 610 1230 650 1250 680 1240 700 1180 730 1210 770 1240 810 1210 780 1165 820 1150 850 1120 880 1110"/>
            <path d="M330 600C335 580 390 570 400 590 430 605 470 605 465 640 450 680 410 670 395 645 340 655 320 620 330 600zM285 815c20-10 30 10 35 15 40 15 20 40-10 45-30-5-5-30-30-40-5-10-2-18 5-20z"/>
            <path d="M100 1370C180 1365 240 1350 260 1340 290 1350 320 1330 330 1340 345 1370 300 1380 200 1390 140 1420 60 1400 80 1425"/>
            <path d="M870 1110C890 1080 870 1120 875 1080L940 1020M930 1040C910 1060 940 1080 925 1110 940 1130 970 1120 980 1110 1010 1090 1040 1060 1040 1030 1060 990 1040 970 1040 955 1070 940 1100 930 1110 915 1140 880 1160 920 1180 890 1200 900 1210 870 1235 862 1290 870 1270 900 1290 900 1310 880 1370 880 1400 890 1450 920 1500 940 1520 970 1570 990 1570 1040 1580 1060 1580 1080 1630 1120 1620 1150 1660 1150 1650 1200 1680 1225 1740 1220 1760 1210"/>
            <path d="M1685 1220C1660 1260 1680 1300 1730 1360L1820 1445 1850 1460 1860 1485M1375 24L1420 55 1490 55 1515 90 1568 97C1590 50 1620 55 1650 40L1680 58 1740 24M2090 77L2220 75"/>
            <circle cx="472" cy="497" r="18"/><circle cx="1227" cy="912" r="17"/><circle cx="399" cy="1065" r="20"/><circle cx="418" cy="1101" r="17"/><circle cx="844" cy="1147" r="12"/><circle cx="905" cy="1143" r="16"/><circle cx="472" cy="1258" r="12"/>
          </g>

          <g class="map-labels">
            <text x="1030" y="620">Alaska</text>
            <text x="1561" y="470">Yukon</text>
            <text x="1950" y="1231">British Columbia</text>
            <text x="2145" y="413" class="water">Great</text>
            <text x="2145" y="431" class="water">Bear Lake</text>
          </g>

          <!-- airports and handles use pixel units -->
          <g id="airports" transform="scale(3) translate(-370 -355)"></g>

          <g transform="scale(3) translate(-370 -355)">
            <path d="M379.500 363.500h730v485h-730z" fill="none" stroke="#3f8fc6"/>
            <g fill="#fff" stroke="#4d97c8">
              <path d="M379.500 363.500h13v13h-13zM738.500 363.500h12v12h-12zM1097.500 363.500h12v12h-12zM379.500 600.500h12v12h-12zM1097.500 600.500h12v12h-12zM379.500 836.500h13v12h-13zM738.500 836.500h12v12h-12zM1097.500 836.500h12v12h-12z"/>
            </g>
            <use href="#rotate" transform="translate(1084 390)"/>
            <use href="#rotate" transform="matrix(0 1 1 0 405 823)"/>
            <use href="#rotate" transform="translate(1084 823) scale(1 -1)"/>
          </g>
        </svg>
      </div>
    </div>
  </section>

  <aside class="dock">
    <div class="splitter"><span></span></div>
    <div class="panels">
      <div class="tab">Items</div>
      <h2>Items</h2>
      <div class="tree">
        <div class="tree-head">
          <svg viewBox="0 0 20 14"><path d="M1 5Q9-2 18 4" stroke="#aaa" fill="none"/><path d="M1 8q9-8 18 0-9 9-18 0z" fill="#eee" stroke="#999"/><circle cx="10" cy="7.500" r="3.500" fill="#555"/><circle cx="10" cy="7" r="1.500" fill="#111"/></svg>
        </div>
        <div class="tree-row"><input type="checkbox" class="visible" aria-label="Map 1 visible" checked></div>
      </div>
      <div class="tab">Layout</div>
      <h2>Layout</h2>
      <details open>
        <summary>General Settings</summary>
        <div class="group ref-group">
          <label for="ref-map">Reference map</label>
        </div>
      </details>
      <details open>
        <summary>Guides and Grid</summary>
        <div class="group">
          <label for="spacing">Grid spacing</label>
          <input type="text" id="spacing" value="10.000">
          <label for="offset-x">Grid offset</label>
          <input type="text" id="offset-x" value="x: 0.000">
          <input type="text" id="offset-y" aria-label="Grid offset y" value="y: 0.000">
          <label for="snap">Snap tolerance</label>
          <input type="text" id="snap" value="5 px">
        </div>
      </details>
      <details open>
        <summary>Export Settings</summary>
        <div class="group export-group">
          <label for="raster">Export resolution</label>
          <input type="checkbox" id="raster" checked>
          <input type="checkbox" aria-label="Always export as vectors" checked>
        </div>
      </details>
    </div>
  </aside>
</main>

<footer class="status-bar">
  <span>x: 397.702 mm</span>
  <span>y: -16.2422 mm</span>
</footer>

<script src="script.js"></script>
</body>
</html>
```
FILE: styles.css
```css
* { margin: 0; padding: 0; box-sizing: border-box; }

body {
  font-family: 'Segoe UI', 'Noto Sans', 'Open Sans', sans-serif;
  font-size: 14px;
  line-height: 20px;
  color: #f0f0f0;
  background: #1e1e1e;
  height: 100vh;
  display: flex;
  flex-direction: column;
  overflow: hidden;
}

button, input, select {
  font: inherit;
  color: inherit;
  background: none;
  border: none;
}

.sprite {
  position: absolute;
  width: 0;
  height: 0;
}

/* title and menu */
.title-bar {
  display: flex;
  align-items: center;
  gap: 7px;
  height: 24px;
  padding-bottom: 2px;
  background: #20201f;
}

.title-bar h1 {
  font-size: 14px;
  font-weight: normal;
}

.logo {
  width: 20px;
  height: 20px;
  margin-left: -6px;
}

.menu-bar {
  display: flex;
  gap: 10px;
  height: 27px;
}

.menu-bar > button,
.menu-holder > button {
  height: 27px;
  padding: 0 4px;
}

.menu-bar u { text-underline-offset: 2px; }

.menu-holder { position: relative; }

.menu-holder > .open { background: #e3241b; }

.menu {
  position: absolute;
  z-index: 10;
  top: 27px;
  left: 0;
  width: 213px;
  list-style: none;
  background: #303030;
  border: 1px solid #141414;
  box-shadow: 2px 2px 4px rgba(0, 0, 0, 0.7);
}

.menu button {
  position: relative;
  display: flex;
  align-items: center;
  gap: 6px;
  width: 100%;
  height: 30px;
  padding-left: 9px;
  text-align: left;
  white-space: nowrap;
}

.menu svg {
  width: 19px;
  height: 19px;
}

.menu .sub::after {
  content: "";
  position: absolute;
  right: 7px;
  border: 5px solid transparent;
  border-left-color: #aaa;
  border-right: none;
}

/* toolbars */
.toolbar-row {
  display: flex;
  gap: 18px;
  height: 49px;
  padding-bottom: 1px;
  border-top: 1px solid #6c6c6c;
}

.toolbar-row + .toolbar-row { height: 47px; }

.toolbar {
  display: flex;
  align-items: center;
  gap: 5px;
}

.toolbar button {
  display: grid;
  place-items: center;
  width: 36px;
  height: 36px;
}

.toolbar svg,
.toolbox svg {
  width: 28px;
  height: 28px;
}

.grip {
  width: 5px;
  height: 22px;
  background: linear-gradient(90deg, transparent 2px, #1e1e1e 2px 3px, transparent 3px), repeating-linear-gradient(#666 0 2px, transparent 2px 4px);
}

.sep {
  width: 4px;
  height: 40px;
  border-left: 1px solid #161616;
}

.combo { position: relative; }

.combo select {
  appearance: none;
  width: 88px;
  height: 36px;
  padding: 0 5px;
  color: #9db4c4;
  border: 1px solid #121212;
  border-radius: 2px;
  background: linear-gradient(#4b4b4b, #4b4b4b) right / 24px 100% no-repeat;
}

.combo::after {
  content: "";
  position: absolute;
  right: 7px;
  top: 15px;
  border: 5px solid transparent;
  border-top: 6px solid #8c8c8c;
  border-bottom: none;
  pointer-events: none;
}

.toolbar .drop {
  display: flex;
  align-items: center;
  gap: 8px;
  width: 50px;
  padding-left: 4px;
}

.drop::after {
  content: "";
  border: 4px solid transparent;
  border-top: 5px solid #999;
  border-bottom: none;
}

/* main area */
.workspace {
  flex: 1;
  min-height: 0;
  display: flex;
  border-top: 1px solid #6c6c6c;
}

.toolbox {
  display: flex;
  flex-direction: column;
  gap: 4px;
  width: 41px;
  border-right: 1px solid #161616;
}

.grip-h {
  height: 6px;
  width: 22px;
  margin: 8px 0 0 8px;
  background: linear-gradient(transparent 2px, #1e1e1e 2px 3px, transparent 3px), repeating-linear-gradient(90deg, #666 0 2px, transparent 2px 4px);
}

.toolbox button {
  display: flex;
  align-items: center;
  flex: none;
  width: 36px;
  height: 36px;
  padding-left: 4px;
}

.toolbox .active {
  background: #343434;
  border: 1px solid #505050;
  border-left: none;
  border-radius: 2px;
}

.view {
  flex: 1;
  min-width: 0;
  display: grid;
  grid-template: 28px minmax(0, 1fr) / 29px minmax(0, 1fr);
}

.ruler-top,
.ruler-left {
  width: 100%;
  height: 100%;
  font-size: 13px;
  fill: #b8b8b8;
}

.ruler-top { grid-column: 2; }

.tick { stroke: #c8c8c8; }

.cursor {
  stroke: #f00000;
  stroke-width: 2;
}

.canvas {
  display: grid;
  place-items: center;
  padding-bottom: 3px;
  background: #d7d7d7;
  overflow: hidden;
}

.page {
  width: 802px;
  padding: 39px 35px 41px 36px;
  background: #fff;
  border-top: 1px solid #777;
  box-shadow: 8px 8px 0 #969696;
}

.map {
  display: block;
  width: 100%;
}

.map-labels {
  font-family: 'Open Sans', sans-serif;
  font-size: 16px;
  font-style: italic;
  text-anchor: middle;
  fill: #8d6c99;
}

.map-labels .water { fill: #4d80b3; }

/* right dock */
.dock {
  display: flex;
  width: 59px;
  overflow: hidden;
}

.splitter {
  flex: none;
  display: flex;
  align-items: center;
  justify-content: center;
  width: 9px;
}

.splitter span {
  width: 2px;
  height: 22px;
  background: repeating-linear-gradient(#777 0 2px, transparent 2px 4px);
}

.panels {
  flex: none;
  width: 240px;
  padding-top: 2px;
}

.tab {
  width: 90px;
  height: 32px;
  padding: 6px 12px;
  border: 1px solid #3a3a3a;
  border-bottom: none;
  border-radius: 3px 0 0 0;
}

.panels h2 {
  height: 26px;
  padding: 3px;
  font-size: 14px;
  font-weight: normal;
}

.tree {
  height: 217px;
  margin-bottom: 10px;
  background: #2d2d2d;
}

.tree-head {
  display: flex;
  align-items: center;
  height: 24px;
  padding-left: 2px;
  background: linear-gradient(90deg, transparent 42px, #333 42px 44px, transparent 44px), linear-gradient(#555, #424242);
  border-bottom: 1px solid #777;
}

.tree-head svg {
  width: 20px;
  height: 14px;
}

.tree-row {
  height: 23px;
  padding: 3px 4px;
  background: #1e1e1e;
}

input[type="checkbox"] {
  appearance: none;
  display: block;
  width: 16px;
  height: 16px;
}

.visible {
  background: #262626;
  border: 1px solid #333;
}

.visible::after {
  content: "";
  display: block;
  width: 6px;
  height: 11px;
  margin: 0 0 0 4px;
  border: solid #e6e6e6;
  border-width: 0 2px 2px 0;
  transform: rotate(35deg);
}

summary {
  display: flex;
  align-items: center;
  gap: 10px;
  height: 24px;
  padding-left: 17px;
  white-space: nowrap;
}

details { padding-top: 19px; }
details + details { padding-top: 8px; }

summary::before {
  content: "";
  border: 6px solid transparent;
  border-top: 8px solid #4a4a4a;
  border-bottom: none;
}

.group {
  margin-left: 14px;
  padding: 15px 0 8px 15px;
  border: 2px solid #292929;
  border-radius: 3px;
}

.ref-group { padding: 21px 0 20px 14px; }
.export-group { padding-top: 22px; }

.group label {
  display: block;
  height: 20px;
  white-space: nowrap;
}

.group input[type="text"] {
  display: block;
  width: 150px;
  height: 27px;
  padding: 0 4px;
  margin: 10px 0 9px;
  background: #2b2b2b;
  border: 1px solid #141414;
  border-radius: 3px;
}

.group input[type="text"] + input[type="text"] { margin-top: 12px; }

.group input[type="checkbox"] {
  margin: 19px 0;
  background: #e3241b;
}

.status-bar {
  display: flex;
  justify-content: flex-end;
  align-items: flex-end;
  gap: 37px;
  height: 28px;
  padding-right: 5px;
  line-height: 16px;
}
```
FILE: script.js
```js
const SVG_NS = 'http://www.w3.org/2000/svg';
const PX_PER_MM = 2.694;

const airports = [
  [586, 446], [590, 466], [621, 475], [646, 460], [719, 465], [792, 476], [694, 492], [607, 492],
  [606, 509], [607, 521], [597, 528], [529, 504], [541, 513], [558, 533], [612, 550], [656, 527],
  [658, 536], [712, 515], [747, 532], [747, 539], [761, 525], [765, 524], [770, 529], [786, 547],
  [710, 550], [814, 563], [830, 574], [789, 594], [736, 590], [739, 609], [747, 608], [737, 618],
  [740, 617], [780, 619], [789, 634], [743, 643], [668, 575], [672, 574], [618, 581], [569, 578],
  [582, 597], [551, 603], [626, 608], [672, 620], [599, 628], [548, 637], [484, 553], [499, 555],
  [722, 633], [725, 635], [719, 654], [680, 652], [676, 661], [638, 668], [660, 676], [597, 677],
  [708, 697], [637, 713], [589, 750], [545, 776], [518, 795], [456, 808], [502, 709], [508, 721],
  [857, 657], [907, 658], [904, 663], [902, 682], [906, 689], [923, 713], [934, 717], [941, 723],
  [933, 742], [950, 753]
];

function add(parent, name, attrs, text) {
  const el = document.createElementNS(SVG_NS, name);
  for (const key in attrs) el.setAttribute(key, attrs[key]);
  if (text !== undefined) el.textContent = text;
  parent.appendChild(el);
  return el;
}

function drawAirports() {
  const layer = document.getElementById('airports');
  airports.forEach(([x, y]) => {
    add(layer, 'use', { href: '#plane', x: x - 5, y: y - 5, width: 10, height: 10, stroke: '#fff', 'stroke-width': 1, 'paint-order': 'stroke' });
  });
}

// a tick every 5 mm, a label every 20 mm
function drawRulers() {
  const page = document.getElementById('page').getBoundingClientRect();
  const top = document.getElementById('ruler-top');
  const left = document.getElementById('ruler-left');
  const t = top.getBoundingClientRect();
  const l = left.getBoundingClientRect();
  top.innerHTML = '';
  left.innerHTML = '';

  for (let mm = -200; mm <= 1000; mm += 5) {
    const major = mm % 20 === 0;
    const size = major ? 28 : mm % 10 === 0 ? 10 : 7;

    const x = Math.round(page.left - t.left + mm * PX_PER_MM) + 0.5;
    if (x > 0 && x < t.width) {
      add(top, 'line', { class: 'tick', x1: x, x2: x, y1: 28 - size, y2: 28 });
      if (major) add(top, 'text', { x: x + 3, y: 16 }, mm);
    }

    const y = Math.round(page.top - l.top + mm * PX_PER_MM) + 0.5;
    if (y > 0 && y < l.height) {
      add(left, 'line', { class: 'tick', x1: 29 - size, x2: 29, y1: y, y2: y });
      if (major) add(left, 'text', { transform: `translate(17 ${y + 3}) rotate(-90)`, 'text-anchor': 'end' }, mm);
    }
  }

  // mouse position
  add(top, 'line', { class: 'cursor', x1: t.width - 2, x2: t.width - 2, y1: 0, y2: 28 });
  const cy = page.top - l.top - 43;
  add(left, 'line', { class: 'cursor', x1: 0, x2: 29, y1: cy, y2: cy });
}

drawAirports();
drawRulers();
window.addEventListener('resize', drawRulers);
```
